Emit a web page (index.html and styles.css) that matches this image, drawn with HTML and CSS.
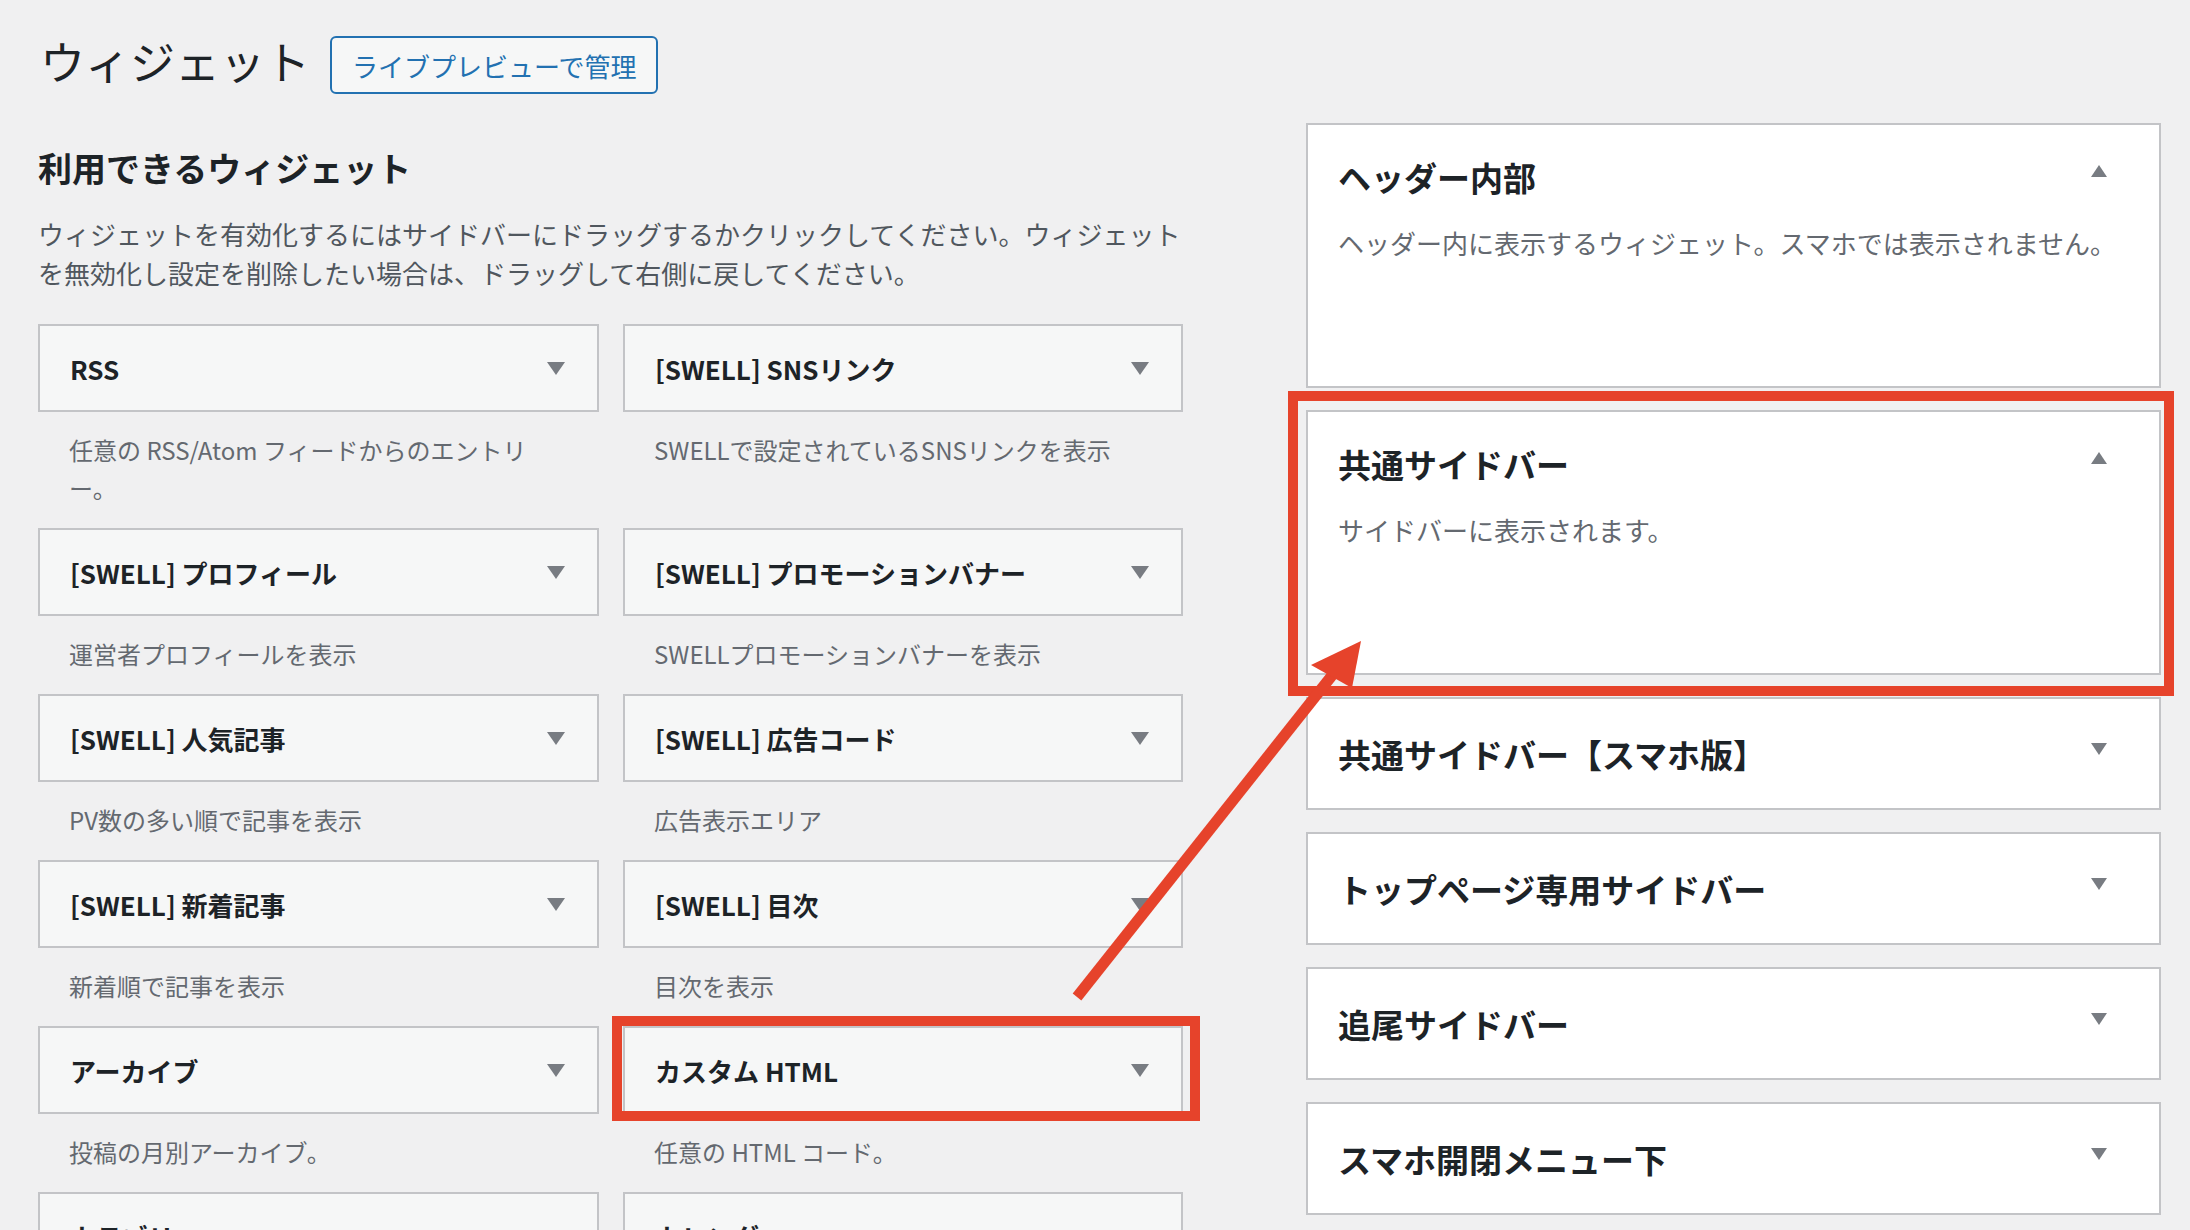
FILE: index.html
```html
<!DOCTYPE html>
<html lang="ja">
<head>
<meta charset="utf-8">
<title>ウィジェット</title>
<link rel="stylesheet" href="styles.css">
</head>
<body>
<div class="wrap">
  <header class="page-head">
    <h1 class="page-title">ウィジェット</h1>
    <a class="btn-outline">ライブプレビューで管理</a>
  </header>
  <div class="columns">
    <section class="available">
      <h2 class="section-title">利用できるウィジェット</h2>
      <p class="section-desc">ウィジェットを有効化するにはサイドバーにドラッグするかクリックしてください。ウィジェット<br>を無効化し設定を削除したい場合は、ドラッグして右側に戻してください。</p>
      <div class="widget-grid">
        <div class="widget">
          <div class="widget-top"><h3>RSS</h3><span class="tri-down"></span></div>
          <p class="widget-desc">任意の RSS/Atom フィードからのエントリ<br>ー。</p>
        </div>
        <div class="widget">
          <div class="widget-top"><h3>[SWELL] SNSリンク</h3><span class="tri-down"></span></div>
          <p class="widget-desc">SWELLで設定されているSNSリンクを表示</p>
        </div>
        <div class="widget">
          <div class="widget-top"><h3>[SWELL] プロフィール</h3><span class="tri-down"></span></div>
          <p class="widget-desc">運営者プロフィールを表示</p>
        </div>
        <div class="widget">
          <div class="widget-top"><h3>[SWELL] プロモーションバナー</h3><span class="tri-down"></span></div>
          <p class="widget-desc">SWELLプロモーションバナーを表示</p>
        </div>
        <div class="widget">
          <div class="widget-top"><h3>[SWELL] 人気記事</h3><span class="tri-down"></span></div>
          <p class="widget-desc">PV数の多い順で記事を表示</p>
        </div>
        <div class="widget">
          <div class="widget-top"><h3>[SWELL] 広告コード</h3><span class="tri-down"></span></div>
          <p class="widget-desc">広告表示エリア</p>
        </div>
        <div class="widget">
          <div class="widget-top"><h3>[SWELL] 新着記事</h3><span class="tri-down"></span></div>
          <p class="widget-desc">新着順で記事を表示</p>
        </div>
        <div class="widget">
          <div class="widget-top"><h3>[SWELL] 目次</h3><span class="tri-down"></span></div>
          <p class="widget-desc">目次を表示</p>
        </div>
        <div class="widget">
          <div class="widget-top"><h3>アーカイブ</h3><span class="tri-down"></span></div>
          <p class="widget-desc">投稿の月別アーカイブ。</p>
        </div>
        <div class="widget">
          <div class="widget-top"><h3>カスタム HTML</h3><span class="tri-down"></span></div>
          <p class="widget-desc">任意の HTML コード。</p>
        </div>
        <div class="widget">
          <div class="widget-top"><h3>カテゴリー</h3><span class="tri-down"></span></div>
          <p class="widget-desc">カテゴリーのリストやドロップダウン。</p>
        </div>
        <div class="widget">
          <div class="widget-top"><h3>カレンダー</h3><span class="tri-down"></span></div>
          <p class="widget-desc">サイトの投稿カレンダー。</p>
        </div>
      </div>
    </section>
    <section class="sidebars">
      <div class="sidebar open">
        <div class="sidebar-head"><h2>ヘッダー内部</h2><span class="tri-up"></span></div>
        <p class="sidebar-desc">ヘッダー内に表示するウィジェット。スマホでは表示されません。</p>
      </div>
      <div class="sidebar open">
        <div class="sidebar-head"><h2>共通サイドバー</h2><span class="tri-up"></span></div>
        <p class="sidebar-desc">サイドバーに表示されます。</p>
      </div>
      <div class="sidebar">
        <div class="sidebar-head"><h2>共通サイドバー【スマホ版】</h2><span class="tri-down small"></span></div>
      </div>
      <div class="sidebar">
        <div class="sidebar-head"><h2>トップページ専用サイドバー</h2><span class="tri-down small"></span></div>
      </div>
      <div class="sidebar">
        <div class="sidebar-head"><h2>追尾サイドバー</h2><span class="tri-down small"></span></div>
      </div>
      <div class="sidebar">
        <div class="sidebar-head"><h2>スマホ開閉メニュー下</h2><span class="tri-down small"></span></div>
      </div>
    </section>
  </div>
</div>
<div class="annot">
  <div class="mark mark-sidebar"></div>
  <div class="mark mark-widget"></div>
  <svg class="arrow" width="2190" height="1230" viewBox="0 0 2190 1230">
    <line x1="1077" y1="997" x2="1334" y2="673" stroke="#e6432b" stroke-width="11"/>
    <polygon points="1361,641 1311,665 1352,688" fill="#e6432b"/>
  </svg>
</div>
</body>
</html>
```

FILE: styles.css
```css
html, body {
  margin: 0;
  padding: 0;
}

body {
  position: relative;
  width: 2190px;
  height: 1230px;
  overflow: hidden;
  background: #f0f0f1;
  color: #1d2327;
  font-family: "Noto Sans CJK JP", "Noto Sans", sans-serif;
}

.wrap {
  padding: 36px 29px 0 38px;
}

.page-head {
  display: flex;
  align-items: center;
  gap: 20px;
  height: 58px;
}

.page-title {
  margin: 0 0 8px;
  padding-left: 2px;
  font-size: 45px;
  font-weight: 400;
  line-height: 58px;
}

.btn-outline {
  display: inline-flex;
  align-items: center;
  box-sizing: border-box;
  height: 58px;
  padding: 0 20px;
  border: 2px solid #2271b1;
  border-radius: 6px;
  background: #f6f7f7;
  color: #2271b1;
  font-size: 26px;
}

.columns {
  display: flex;
  align-items: flex-start;
  gap: 123px;
}

.available {
  width: 1145px;
  flex: none;
}

.section-title {
  margin: 52px 0 0;
  font-size: 34px;
  font-weight: 700;
  line-height: 44px;
}

.section-desc {
  margin: 24px 0 0;
  font-size: 26px;
  line-height: 39px;
  color: #50575e;
}

.widget-grid {
  display: grid;
  grid-template-columns: 561px 560px;
  column-gap: 24px;
  margin-top: 32px;
}

.widget-top {
  display: flex;
  align-items: center;
  justify-content: space-between;
  box-sizing: border-box;
  height: 88px;
  padding: 0 32px 0 30px;
  border: 2px solid #c3c4c7;
  background: #f6f7f7;
}

.widget-top h3 {
  margin: 0;
  font-size: 26px;
  font-weight: 700;
}

.tri-down {
  width: 0;
  height: 0;
  border-left: 9px solid transparent;
  border-right: 9px solid transparent;
  border-top: 13px solid #787c82;
}

.tri-down.small {
  border-left-width: 8px;
  border-right-width: 8px;
  border-top-width: 12px;
  margin-bottom: 10px;
}

.tri-up {
  width: 0;
  height: 0;
  border-left: 8px solid transparent;
  border-right: 8px solid transparent;
  border-bottom: 12px solid #787c82;
  margin-bottom: 12px;
}

.widget-desc {
  margin: 0;
  padding: 19px 30px 21px 31px;
  font-size: 24px;
  line-height: 38px;
  color: #646970;
}

.sidebars {
  display: flex;
  flex-direction: column;
  gap: 22px;
  width: 855px;
  flex: none;
  margin-top: 29px;
}

.sidebar {
  box-sizing: border-box;
  height: 113px;
  padding: 35px 52px 0 30px;
  border: 2px solid #c3c4c7;
  background: #fff;
}

.sidebar.open {
  height: 265px;
  padding-top: 32px;
}

.sidebar-head {
  display: flex;
  align-items: center;
  justify-content: space-between;
}

.sidebar-head h2 {
  margin: 0;
  font-size: 33px;
  font-weight: 700;
  line-height: 40px;
}

.sidebar-desc {
  margin: 27px -40px 0 0;
  font-size: 26px;
  line-height: 38px;
  color: #646970;
  white-space: nowrap;
}

.annot {
  position: absolute;
  top: 0;
  left: 0;
  width: 2190px;
  height: 1230px;
  pointer-events: none;
}

.mark {
  position: absolute;
  box-sizing: border-box;
  border: 10px solid #e6432b;
}

.mark-sidebar {
  left: 1288px;
  top: 391px;
  width: 886px;
  height: 305px;
}

.mark-widget {
  left: 612px;
  top: 1016px;
  width: 588px;
  height: 105px;
}

.arrow {
  position: absolute;
  top: 0;
  left: 0;
}
```
